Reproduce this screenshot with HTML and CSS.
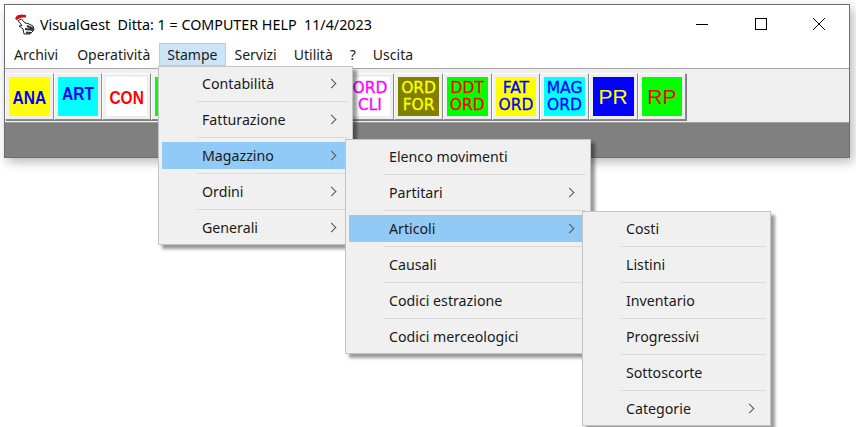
FILE: index.html
```html
<!DOCTYPE html>
<html lang="it">
<head>
<meta charset="utf-8">
<title>VisualGest</title>
<link rel="stylesheet" href="styles.css">
</head>
<body>
<div class="window">
  <header class="titlebar">
    <svg class="app-icon" width="21" height="21" viewBox="0 0 21 21">
      <path d="M4 6.5 L7.5 5 L11 9 L14 9.5 L19 12 L20 16 L16 20 L10 20 L9 15 L5 12 L8 11.5 Z" fill="#fff" stroke="#222" stroke-width="1"/>
      <path d="M1 4.5 L3 1.5 L7 0.5 L12 1 L12 3.5 L8 3.5 L4 5 L3 6.5 Z" fill="#c8101c"/>
      <path d="M13 12 L19 14.5 M11 15 L20 16 M12 18.5 L17 19" stroke="#333" stroke-width="2"/>
    </svg>
    <span class="title">VisualGest&nbsp; Ditta: 1 = COMPUTER HELP&nbsp; 11/4/2023</span>
    <div class="caption-btns">
      <svg width="14" height="14" viewBox="0 0 14 14"><path d="M1 7.5H13" stroke="#000"/></svg>
      <svg width="14" height="14" viewBox="0 0 14 14"><rect x="1.5" y="1.5" width="11" height="11" fill="none" stroke="#000"/></svg>
      <svg width="14" height="14" viewBox="0 0 14 14"><path d="M1 1L13 13M13 1L1 13" stroke="#000"/></svg>
    </div>
  </header>
  <nav class="menubar">
    <span class="menu-top">Archivi</span>
    <span class="menu-top">Operatività</span>
    <span class="menu-top active">Stampe</span>
    <span class="menu-top">Servizi</span>
    <span class="menu-top">Utilità</span>
    <span class="menu-top">?</span>
    <span class="menu-top">Uscita</span>
  </nav>
  <div class="toolbar">
    <div class="tool"><div class="face yellow blue-t bold down"><span>ANA</span></div></div>
    <div class="tool"><div class="face cyan blue-t bold up"><span>ART</span></div></div>
    <div class="tool"><div class="face white red-t bold down"><span>CON</span></div></div>
    <div class="tool"><div class="face green"></div></div>
    <div class="tool"><div class="face white"></div></div>
    <div class="tool"><div class="face white"></div></div>
    <div class="tool"><div class="face white"></div></div>
    <div class="tool"><div class="face white magenta-t">ORD<br>CLI</div></div>
    <div class="tool"><div class="face olive yellow-t">ORD<br>FOR</div></div>
    <div class="tool"><div class="face green red-t">DDT<br>ORD</div></div>
    <div class="tool"><div class="face yellow blue-t">FAT<br>ORD</div></div>
    <div class="tool"><div class="face cyan blue-t">MAG<br>ORD</div></div>
    <div class="tool"><div class="face blue yellow-t large">PR</div></div>
    <div class="tool"><div class="face green red-t large">RP</div></div>
  </div>
  <div class="workspace"></div>
</div>

<div class="menu menu-1">
  <div class="item"><span>Contabilità</span><i class="chev"></i></div>
  <div class="item"><span>Fatturazione</span><i class="chev"></i></div>
  <div class="item selected"><span>Magazzino</span><i class="chev"></i></div>
  <div class="item"><span>Ordini</span><i class="chev"></i></div>
  <div class="item"><span>Generali</span><i class="chev"></i></div>
</div>
<div class="menu menu-2">
  <div class="item"><span>Elenco movimenti</span></div>
  <div class="item"><span>Partitari</span><i class="chev"></i></div>
  <div class="item selected"><span>Articoli</span><i class="chev"></i></div>
  <div class="item"><span>Causali</span></div>
  <div class="item"><span>Codici estrazione</span></div>
  <div class="item"><span>Codici merceologici</span></div>
</div>
<div class="menu menu-3">
  <div class="item"><span>Costi</span></div>
  <div class="item"><span>Listini</span></div>
  <div class="item"><span>Inventario</span></div>
  <div class="item"><span>Progressivi</span></div>
  <div class="item"><span>Sottoscorte</span></div>
  <div class="item"><span>Categorie</span><i class="chev"></i></div>
</div>
</body>
</html>
```
FILE: styles.css
```css
html, body { margin: 0; padding: 0; }
body {
  width: 856px;
  height: 427px;
  overflow: hidden;
  background: #fff;
  position: relative;
  font-family: "Noto Sans", "Open Sans", sans-serif;
  font-size: 14px;
  color: #1a1a1a;
}
.window {
  margin: 4px 0 0 4px;
  width: 846px;
  height: 154px;
  box-sizing: border-box;
  border: 1px solid #6e6e6e;
  background: #fff;
  box-shadow: 3px 4px 10px rgba(0, 0, 0, .28);
  display: flex;
  flex-direction: column;
}
.titlebar {
  height: 38px;
  display: flex;
  align-items: center;
  padding-left: 9px;
  flex: none;
}
.app-icon { flex: none; margin-right: 5px; }
.title { font-size: 14.3px; color: #000; white-space: nowrap; }
.caption-btns {
  margin-left: auto;
  width: 131px;
  margin-right: 23px;
  display: flex;
  justify-content: space-between;
  align-items: center;
}
.menubar {
  height: 25px;
  display: flex;
  align-items: flex-start;
  padding-left: 0.5px;
  border-bottom: 1px solid #a6a6a6;
  flex: none;
}
.menu-top {
  height: 23px;
  line-height: 21px;
  padding: 0 7.5px;
  box-sizing: border-box;
  font-size: 14px;
  border: 1px solid transparent;
}
.menu-top:first-child { margin-right: 2px; }
.menu-top.active { background: #cce4f7; border-color: #a9d3f2; }
.toolbar {
  height: 54px;
  background: #efefef;
  display: flex;
  padding: 4px 0 0 0;
  box-sizing: border-box;
  border-bottom: 1px solid #a0a0a0;
  flex: none;
}
.tool {
  width: 48.67px;
  height: 47px;
  box-sizing: border-box;
  border: 1px solid;
  border-color: #fff #8a8a8a #8a8a8a #fff;
  padding: 3px;
  flex: none;
  box-shadow: 1px 1px 0 #808080;
}
.face {
  width: 100%;
  height: 100%;
  box-sizing: border-box;
  padding-top: 1px;
  display: flex;
  align-items: center;
  justify-content: center;
  text-align: center;
  font-family: "DejaVu Sans", "Liberation Sans", sans-serif;
  font-size: 15.5px;
  line-height: 17.5px;
  -webkit-text-stroke: .3px currentColor;
}
.bold {
  font-family: "Liberation Sans", sans-serif;
  font-weight: 700;
  font-size: 15.5px;
  -webkit-text-stroke: 0;
}
.bold span { display: inline-block; transform: scaleY(1.2); }
.up { padding: 0 0 6px; }
.down { padding-top: 2px; }
.large {
  font-family: "Liberation Sans", sans-serif;
  font-size: 21px;
  padding-top: 0;
  -webkit-text-stroke: 0;
}
.yellow { background: #ff0; }
.cyan { background: #0ff; }
.white { background: #fff; }
.green { background: #0f0; }
.olive { background: #808000; }
.blue { background: #00f; }
.blue-t { color: #00f; }
.red-t { color: #f00; }
.magenta-t { color: #f0f; }
.yellow-t { color: #ff0; }
.workspace { flex: 1; background: #808080; }

.menu {
  position: absolute;
  box-sizing: border-box;
  background: #f0f0f0;
  border: 1px solid #c4c4c4;
  padding: 3px;
  display: flex;
  flex-direction: column;
  gap: 9px;
  box-shadow: 4px 4px 3px rgba(0, 0, 0, .4);
}
.menu-1 { left: 158px; top: 66px; width: 195px; }
.menu-2 { left: 345px; top: 139px; width: 246px; }
.menu-3 { left: 582px; top: 211px; width: 189px; }
.item {
  height: 27px;
  flex: none;
  box-sizing: border-box;
  padding: 0 14px 1px 40px;
  display: flex;
  align-items: center;
  justify-content: space-between;
  position: relative;
  font-size: 14.2px;
  white-space: nowrap;
}
.item + .item::before {
  content: "";
  position: absolute;
  left: 35px;
  right: 1px;
  top: -5px;
  height: 1px;
  background: #d9d9d9;
}
.item.selected { background: #91c9f7; }
.chev {
  width: 7px;
  height: 7px;
  box-sizing: border-box;
  border-top: 1.5px solid #555;
  border-right: 1.5px solid #555;
  transform: rotate(45deg);
  margin-right: 0;
}
```
